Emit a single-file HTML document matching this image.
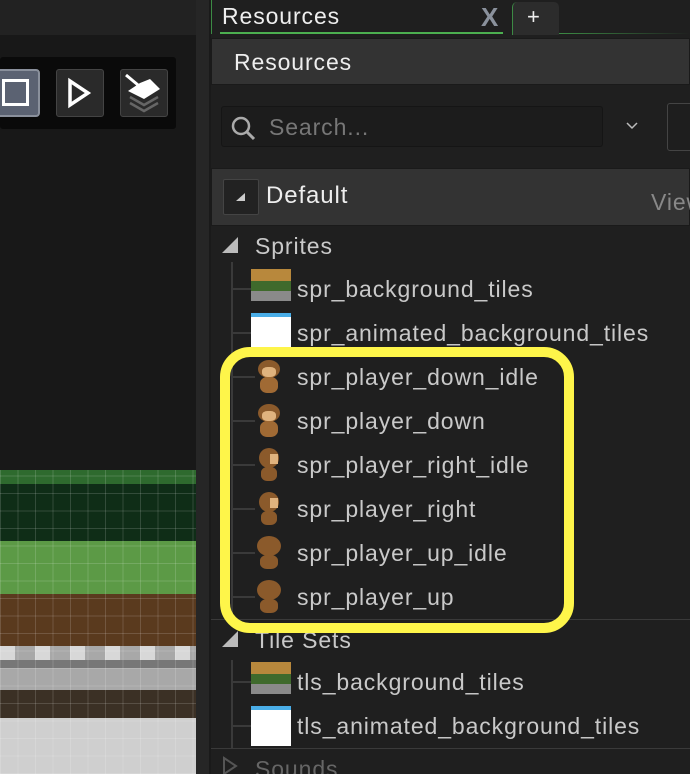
<!DOCTYPE html>
<html><head><style>
*{margin:0;padding:0;box-sizing:border-box}
html,body{width:690px;height:774px;overflow:hidden}
body{background:#1f1f1f;font-family:"Liberation Sans","DejaVu Sans",sans-serif;position:relative}
.a{position:absolute}
.t{position:absolute;font-size:23px;letter-spacing:0.9px;color:#c9c9c9;white-space:nowrap;line-height:26px}
.ln{position:absolute;left:233px;width:22px;height:2px;background:#3a3a3a}
.ic{position:absolute;left:251px;width:40px;height:40px}
</style></head><body>
<!-- left -->
<div class="a" style="left:0;top:0;width:197px;height:35px;background:#222"></div>
<div class="a" style="left:0;top:35px;width:197px;height:435px;background:#181818"></div>
<div class="a" style="left:0;top:57px;width:176px;height:72px;background:#0a0a0a;border-radius:3px"></div>
<div class="a" style="left:-4px;top:69px;width:44px;height:48px;background:#5b6272;border:2px solid #8a909c;border-radius:4px"></div>
<div class="a" style="left:2px;top:79px;width:27px;height:27px;border:3px solid #fff;background:#5b6272"></div>
<div class="a" style="left:56px;top:69px;width:48px;height:48px;background:#2a2a2a;border:1px solid #444;border-radius:3px"></div>
<svg class="a" style="left:56px;top:69px" width="48" height="48"><path d="M14 12 L14 36 L32 24 Z" fill="none" stroke="#fff" stroke-width="3.5"/></svg>
<div class="a" style="left:120px;top:69px;width:48px;height:48px;background:#2a2a2a;border:1px solid #444;border-radius:3px"></div>
<svg class="a" style="left:120px;top:69px" width="48" height="48"><path d="M10 28 L24 36 L38 28 M10 34 L24 42 L38 34" fill="none" stroke="#666" stroke-width="2.5"/><path d="M8 22 L24 30 L40 20 L30 10 L20 14 Z" fill="#fff"/><path d="M6 6 L18 16" stroke="#fff" stroke-width="3"/></svg>
<!-- tiles -->
<div class="a" style="left:0;top:470px;width:196px;height:14px;background:#2e6a2e"></div>
<div class="a" style="left:0;top:484px;width:196px;height:57px;background:#0f2d17"></div>
<div class="a" style="left:0;top:541px;width:196px;height:53px;background:#5c9a46"></div>
<div class="a" style="left:0;top:594px;width:196px;height:52px;background:#5a3a1e"></div>
<div class="a" style="left:0;top:646px;width:196px;height:24px;background:repeating-linear-gradient(90deg,#d8d8d8 0 15px,#a8a8a8 15px 35px)"></div>
<div class="a" style="left:0;top:660px;width:196px;height:8px;background:#777"></div>
<div class="a" style="left:0;top:668px;width:196px;height:22px;background:#a8a8a8"></div>
<div class="a" style="left:0;top:690px;width:196px;height:28px;background:#3b3025"></div>
<div class="a" style="left:0;top:718px;width:196px;height:56px;background:#cfcfcf"></div>
<div class="a" style="left:0;top:470px;width:196px;height:304px;background:repeating-linear-gradient(90deg,rgba(255,255,255,.15) 0 1px,transparent 1px 17.5px),repeating-linear-gradient(0deg,rgba(255,255,255,.15) 0 1px,transparent 1px 17.5px)"></div>
<div class="a" style="left:196px;top:0;width:14px;height:774px;background:#262626"></div>
<div class="a" style="left:209px;top:0;width:2px;height:774px;background:#1a1a1a"></div>
<!-- right -->
<div class="a" style="left:211px;top:0;width:479px;height:36px;background:#1f1f1f"></div>
<div class="a" style="left:211px;top:0;width:1px;height:34px;background:#3c8a44"></div>
<div class="t" style="left:222px;top:3px;color:#eee">Resources</div>
<div class="a" style="left:220px;top:32px;width:283px;height:2px;background:#4caf50"></div>
<div class="a" style="left:481px;top:2px;font-size:26px;color:#8a919c;font-weight:bold">X</div>
<div class="a" style="left:512px;top:2px;width:47px;height:33px;background:#2c2c2c;border-radius:5px 5px 0 0;border-left:1px solid #3c8a44"></div>
<div class="a" style="left:527px;top:4px;font-size:22px;color:#eee">+</div>
<div class="a" style="left:559px;top:33px;width:131px;height:1px;background:linear-gradient(90deg,#3c8a44,transparent)"></div>
<div class="a" style="left:211px;top:38px;width:479px;height:47px;background:#333;border:1px solid #1a1a1a"></div>
<div class="t" style="left:234px;top:49px;color:#eee">Resources</div>
<div class="a" style="left:221px;top:106px;width:382px;height:41px;background:#1c1c1c;border:1px solid #151515;border-radius:3px"></div>
<svg class="a" style="left:229px;top:114px" width="30" height="28"><circle cx="12" cy="12" r="8" fill="none" stroke="#aaa" stroke-width="2.5"/><path d="M18 18 L25 25" stroke="#aaa" stroke-width="3"/></svg>
<div class="t" style="left:269px;top:114px;color:#777">Search...</div>
<svg class="a" style="left:625px;top:121px" width="14" height="10"><path d="M2 2 L7 7 L12 2" fill="none" stroke="#bbb" stroke-width="1.5"/></svg>
<div class="a" style="left:667px;top:103px;width:30px;height:48px;border:1px solid #444;border-radius:3px;background:#1e1e1e"></div>
<div class="a" style="left:211px;top:168px;width:479px;height:58px;background:#333;border:1px solid #1a1a1a"></div>
<div class="a" style="left:223px;top:179px;width:36px;height:36px;background:#222;border:1px solid #444;border-radius:2px"></div>
<svg class="a" style="left:223px;top:179px" width="36" height="36"><path d="M13 22 L22 14 L22 22 Z" fill="#ccc"/></svg>
<div class="t" style="left:266px;top:183px;color:#eee;font-size:24px">Default</div>
<div class="t" style="left:651px;top:189px;color:#888">View</div>
<svg class="a" style="left:221px;top:235px" width="18" height="20"><path d="M17 2 L17 18 L1 18 Z" fill="#bbb"/></svg>
<div class="t" style="left:255px;top:233px">Sprites</div>
<div class="a" style="left:231px;top:262px;width:2px;height:356px;background:#3a3a3a"></div>
<div class="ln" style="top:288px"></div><div class="ln" style="top:332px"></div><div class="ln" style="top:376px"></div><div class="ln" style="top:420px"></div><div class="ln" style="top:464px"></div><div class="ln" style="top:508px"></div><div class="ln" style="top:552px"></div><div class="ln" style="top:596px"></div>
<div class="ic" style="top:269px;background:linear-gradient(#b8883c 0 30%,#3f6a2c 30% 55%,#8a8a8a 55% 80%,transparent 80%)"></div>
<div class="ic" style="top:313px;background:#fff;border-top:4px solid #4aaee8"></div>
<div class="t" style="left:297px;top:276px">spr_background_tiles</div>
<div class="t" style="left:297px;top:320px">spr_animated_background_tiles</div>
<div class="t" style="left:297px;top:364px">spr_player_down_idle</div>
<div class="t" style="left:297px;top:408px">spr_player_down</div>
<div class="t" style="left:297px;top:452px">spr_player_right_idle</div>
<div class="t" style="left:297px;top:496px">spr_player_right</div>
<div class="t" style="left:297px;top:540px">spr_player_up_idle</div>
<div class="t" style="left:297px;top:584px">spr_player_up</div>
<!-- monkeys -->
<div class="a" style="left:254px;top:360px;width:28px;height:36px"><div class="a" style="left:4px;top:0;width:22px;height:18px;border-radius:50%;background:#8b5a2b"></div><div class="a" style="left:8px;top:7px;width:14px;height:10px;border-radius:40%;background:#e0b37e"></div><div class="a" style="left:6px;top:17px;width:18px;height:16px;border-radius:40%;background:#a06a34"></div></div>
<div class="a" style="left:254px;top:404px;width:28px;height:36px"><div class="a" style="left:4px;top:0;width:22px;height:18px;border-radius:50%;background:#8b5a2b"></div><div class="a" style="left:8px;top:7px;width:14px;height:10px;border-radius:40%;background:#e0b37e"></div><div class="a" style="left:6px;top:17px;width:18px;height:16px;border-radius:40%;background:#a06a34"></div></div>
<div class="a" style="left:254px;top:448px;width:28px;height:36px"><div class="a" style="left:5px;top:0;width:20px;height:20px;border-radius:50%;background:#8b5a2b"></div><div class="a" style="left:16px;top:6px;width:8px;height:10px;background:#e0b37e"></div><div class="a" style="left:7px;top:19px;width:16px;height:14px;border-radius:40%;background:#8b5a2b"></div></div>
<div class="a" style="left:254px;top:492px;width:28px;height:36px"><div class="a" style="left:5px;top:0;width:20px;height:20px;border-radius:50%;background:#8b5a2b"></div><div class="a" style="left:16px;top:6px;width:8px;height:10px;background:#e0b37e"></div><div class="a" style="left:7px;top:19px;width:16px;height:14px;border-radius:40%;background:#8b5a2b"></div></div>
<div class="a" style="left:254px;top:536px;width:28px;height:36px"><div class="a" style="left:3px;top:0;width:24px;height:20px;border-radius:50%;background:#8b5a2b"></div><div class="a" style="left:6px;top:19px;width:18px;height:14px;border-radius:40%;background:#8b5a2b"></div></div>
<div class="a" style="left:254px;top:580px;width:28px;height:36px"><div class="a" style="left:3px;top:0;width:24px;height:20px;border-radius:50%;background:#8b5a2b"></div><div class="a" style="left:6px;top:19px;width:18px;height:14px;border-radius:40%;background:#8b5a2b"></div></div>
<div class="a" style="left:211px;top:619px;width:479px;height:1px;background:#3a3a3a"></div>
<svg class="a" style="left:221px;top:629px" width="18" height="20"><path d="M17 2 L17 18 L1 18 Z" fill="#bbb"/></svg>
<div class="t" style="left:255px;top:627px">Tile Sets</div>
<div class="a" style="left:231px;top:660px;width:2px;height:88px;background:#3a3a3a"></div>
<div class="ln" style="top:681px"></div><div class="ln" style="top:725px"></div>
<div class="ic" style="top:662px;background:linear-gradient(#b8883c 0 30%,#3f6a2c 30% 55%,#8a8a8a 55% 80%,transparent 80%)"></div>
<div class="ic" style="top:706px;background:#fff;border-top:4px solid #4aaee8"></div>
<div class="t" style="left:297px;top:669px">tls_background_tiles</div>
<div class="t" style="left:297px;top:713px">tls_animated_background_tiles</div>
<div class="a" style="left:211px;top:748px;width:479px;height:1px;background:#3a3a3a"></div>
<svg class="a" style="left:221px;top:756px" width="18" height="20"><path d="M3 2 L15 10 L3 18 Z" fill="none" stroke="#555" stroke-width="2"/></svg>
<div class="t" style="left:255px;top:756px;color:#666">Sounds</div>
<!-- highlight -->
<div class="a" style="left:220px;top:347px;width:354px;height:286px;border:10px solid #fef54a;border-radius:30px"></div>
</body></html>
